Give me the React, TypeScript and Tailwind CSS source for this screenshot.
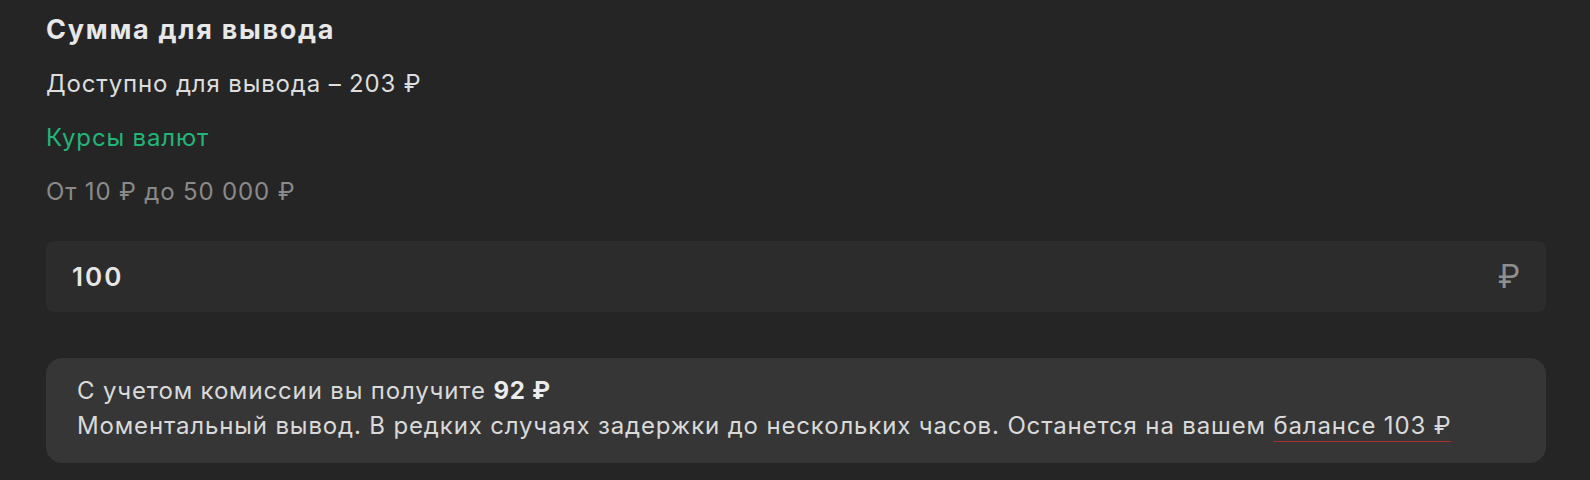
export default function App() {
  return (
    <div
      className="w-[1590px] h-[480px] bg-[#252525] pl-[46px] pr-[44px] pt-[3px] text-[#dedede] tracking-[0.85px]"
      style={{ fontFamily: "Inter, 'Noto Sans', sans-serif" }}
    >
      <div className="h-[54px] flex items-center">
        <h2 className="text-[27px] font-bold tracking-[1.7px] text-[#e8e8e8]">Сумма для вывода</h2>
      </div>
      <div className="h-[54px] flex items-center text-[24px]">Доступно для вывода – 203 ₽</div>
      <div className="h-[54px] flex items-center text-[24px] text-[#22b57a]">Курсы валют</div>
      <div className="h-[54px] flex items-center text-[24px] text-[#8a8a8a]">От 10 ₽ до 50 000 ₽</div>

      <div className="mt-[22px] h-[71px] rounded-[8px] bg-[#2c2c2c] flex items-center justify-between pl-[26px] pr-[25px]">
        <span className="text-[26px] font-semibold tracking-[2px] text-[#e6e6e6]">100</span>
        <span className="text-[32px] text-[#8f8f8f]">₽</span>
      </div>

      <div className="mt-[46px] rounded-[16px] bg-[#363636] pl-[31px] pr-[30px] pt-[15px] pb-[20px] text-[24px] leading-[35px] text-[#dadada]">
        <div>
          С учетом комиссии вы получите <span className="font-bold text-[#ececec]">92 ₽</span>
        </div>
        <div>
          Моментальный вывод. В редких случаях задержки до нескольких часов. Останется на вашем{" "}
          <span className="underline decoration-[#a8302a] decoration-[1px] underline-offset-[7px]">балансе 103 ₽</span>
        </div>
      </div>
    </div>
  );
}
